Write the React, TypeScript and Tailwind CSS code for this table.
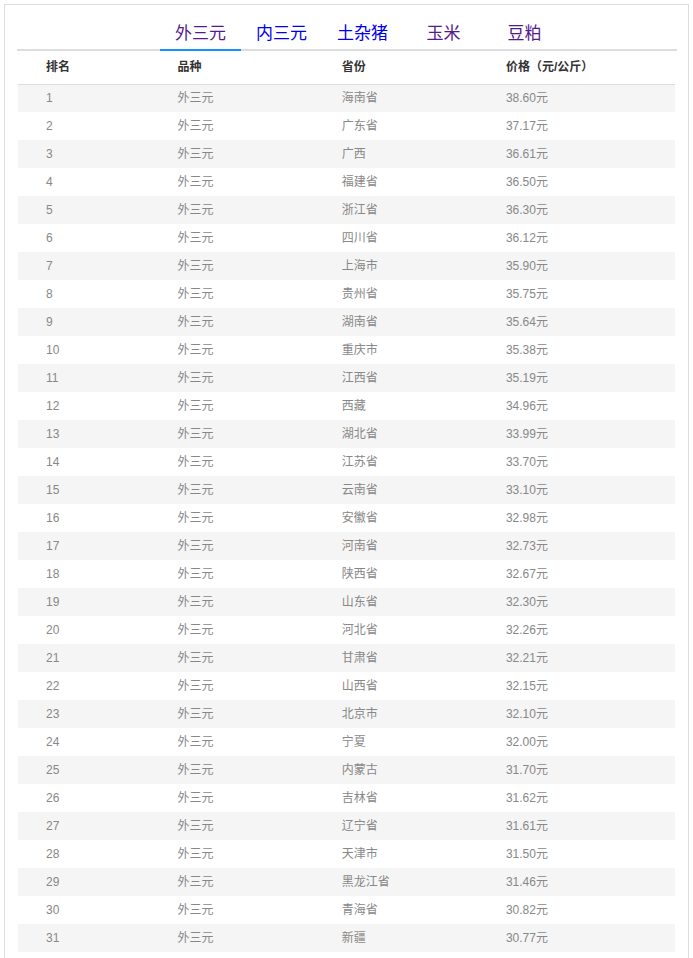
const tabs = [
  { name: '外三元', active: true, color: 'text-[#551a8b]' },
  { name: '内三元', active: false, color: 'text-[#0000ee]' },
  { name: '土杂猪', active: false, color: 'text-[#0000ee]' },
  { name: '玉米', active: false, color: 'text-[#551a8b]' },
  { name: '豆粕', active: false, color: 'text-[#551a8b]' },
];

const rows: [string, string][] = [
  ['海南省', '38.60'],
  ['广东省', '37.17'],
  ['广西', '36.61'],
  ['福建省', '36.50'],
  ['浙江省', '36.30'],
  ['四川省', '36.12'],
  ['上海市', '35.90'],
  ['贵州省', '35.75'],
  ['湖南省', '35.64'],
  ['重庆市', '35.38'],
  ['江西省', '35.19'],
  ['西藏', '34.96'],
  ['湖北省', '33.99'],
  ['江苏省', '33.70'],
  ['云南省', '33.10'],
  ['安徽省', '32.98'],
  ['河南省', '32.73'],
  ['陕西省', '32.67'],
  ['山东省', '32.30'],
  ['河北省', '32.26'],
  ['甘肃省', '32.21'],
  ['山西省', '32.15'],
  ['北京市', '32.10'],
  ['宁夏', '32.00'],
  ['内蒙古', '31.70'],
  ['吉林省', '31.62'],
  ['辽宁省', '31.61'],
  ['天津市', '31.50'],
  ['黑龙江省', '31.46'],
  ['青海省', '30.82'],
  ['新疆', '30.77'],
];

export default function App() {
  return (
    <div className="bg-white min-h-screen pt-[4px] pl-[4px] font-['Liberation_Sans','Noto_Sans_CJK_SC',sans-serif]">
      <div className="w-[685px] border border-b-0 border-[#ddd] pl-[12px] pr-[11px] pb-[20px]">
        {/* 品种切换 */}
        <div className="flex h-[46px] border-b-2 border-[#ddd] pl-[143px]">
          {tabs.map(t => (
            <a
              key={t.name}
              className={`w-[81px] flex items-end justify-center pb-[6px] text-[17px] leading-[18px] cursor-pointer ${t.color} ${
                t.active ? 'border-b-2 border-[#1890ff] -mb-[2px]' : ''
              }`}
            >
              {t.name}
            </a>
          ))}
        </div>

        <table className="ml-[1px] w-[657px] table-fixed border-collapse text-[12px]">
          <colgroup>
            <col className="w-[20%]" />
            <col className="w-[25%]" />
            <col className="w-[25%]" />
            <col className="w-[30%]" />
          </colgroup>
          <thead>
            <tr className="h-[33px] border-b border-[#ddd] text-[#333] font-bold">
              <th className="pl-[28px] text-left font-bold">排名</th>
              <th className="pl-[28px] text-left font-bold">品种</th>
              <th className="pl-[28px] text-left font-bold">省份</th>
              <th className="pl-[28px] text-left font-bold">价格（元/公斤）</th>
            </tr>
          </thead>
          <tbody className="text-[#888]">
            {rows.map(([prov, price], i) => (
              <tr key={prov} className={`h-[28px] ${i % 2 === 0 ? 'bg-[#f5f5f5]' : 'bg-white'}`}>
                <td className="pl-[28px]">{i + 1}</td>
                <td className="pl-[28px]">外三元</td>
                <td className="pl-[28px]">{prov}</td>
                <td className="pl-[28px]">{price}元</td>
              </tr>
            ))}
          </tbody>
        </table>
      </div>
    </div>
  );
}
